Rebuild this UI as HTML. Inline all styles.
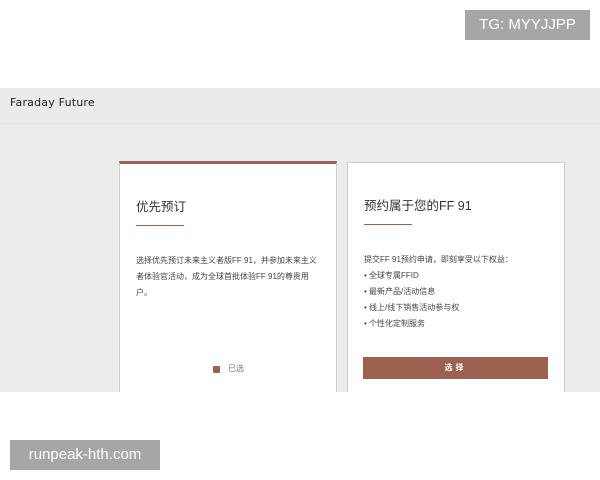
<!DOCTYPE html>
<html><head><meta charset="utf-8"><style>
*{margin:0;padding:0;box-sizing:border-box}
body{width:600px;height:480px;background:#fff;position:relative;overflow:hidden;font-family:"Liberation Sans","Noto Sans CJK SC",sans-serif}
.gray{position:absolute;left:0;top:88px;width:600px;height:304px;background:#ececec}
.hdr{position:absolute;left:0;top:88px;width:600px;height:36px;background:#ebebeb;border-bottom:1px solid #e0e0e0}
.hdr span{position:absolute;left:10px;top:8px;font-size:11px;color:#222;font-family:"DejaVu Sans",sans-serif;letter-spacing:.2px}
.card{position:absolute;background:#fff;border:1px solid #ccc;border-bottom:none}
.c1{left:119px;top:161px;width:218px;height:231px;border-top:3px solid #9c6150}
.c2{left:347px;top:162px;width:218px;height:230px}
.t{position:absolute;font-size:12.5px;color:#333}
.ln{position:absolute;width:48px;height:1px;background:#9c6150}
.p{position:absolute;font-size:8px;color:#444;line-height:16px}
.btn{position:absolute;left:15px;top:194px;width:185px;height:22px;background:#9c6150;color:#fff;font-size:8px;text-align:center;line-height:22px;font-weight:bold;letter-spacing:3px}
.wm{position:absolute;background:#a6a6a6;color:#fff;font-size:15px;line-height:30px;text-align:center}
</style></head><body>
<div class="gray"></div>
<div class="hdr"><span>Faraday Future</span></div>
<div class="card c1">
<div class="t" style="left:16px;top:32px">优先预订</div>
<div class="ln" style="left:16px;top:61px"></div>
<div class="p" style="left:16px;top:89px;width:182px">选择优先预订未来主义者版FF 91，并参加未来主义者体验官活动，成为全球首批体验FF 91的尊贵用户。</div>
<div style="position:absolute;left:93px;top:202px;width:7px;height:7px;background:#9c6150;border-radius:1px"></div>
<div class="p" style="left:108px;top:197px;color:#777">已选</div>
</div>
<div class="card c2">
<div class="t" style="left:16px;top:32px">预约属于您的FF 91</div>
<div class="ln" style="left:16px;top:61px"></div>
<div class="p" style="left:16px;top:89px;width:195px">提交FF 91预约申请，即刻享受以下权益：<br>• 全球专属FFID<br>• 最新产品/活动信息<br>• 线上/线下销售活动参与权<br>• 个性化定制服务</div>
<div class="btn">选择</div>
</div>
<div class="wm" style="left:465px;top:10px;width:125px;height:30px">TG: MYYJJPP</div>
<div class="wm" style="left:10px;top:440px;width:150px;height:30px">runpeak-hth.com</div>
</body></html>
